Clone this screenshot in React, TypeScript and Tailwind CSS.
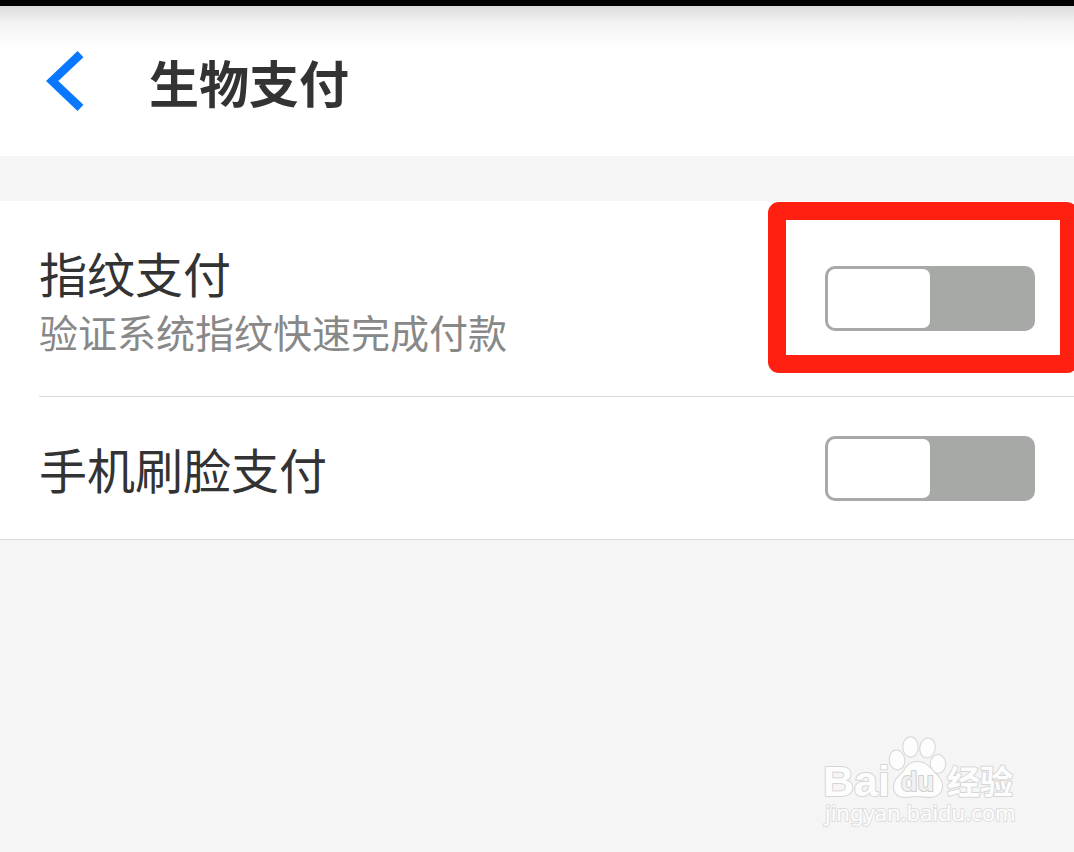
import { useState } from "react";

function Switch({ id, highlighted = false }: { id: string; highlighted?: boolean }) {
  const [on, setOn] = useState(false);
  return (
    <div className="relative h-[65px] w-[210px] shrink-0">
      <input
        id={id}
        type="checkbox"
        role="switch"
        checked={on}
        onChange={() => setOn(!on)}
        className="flex h-full w-full cursor-pointer appearance-none rounded-[10px] bg-[#a7a9a7] p-[3px] before:block before:h-full before:w-[102px] before:rounded-[7px] before:bg-white checked:justify-end checked:bg-[#0a7aff]"
      />
      {highlighted && (
        <div className="pointer-events-none absolute -top-16 -right-[43px] -bottom-[42px] -left-[57px] rounded-[11px] border-[18px] border-[#ff2012]" />
      )}
    </div>
  );
}

function Watermark() {
  return (
    <svg
      viewBox="0 0 220 115"
      className="pointer-events-none absolute right-11 bottom-3 h-[115px] w-[220px]"
      fill="#fdfdfd"
      stroke="#d6d6d6"
      strokeWidth="2"
      strokeLinejoin="round"
      paintOrder="stroke"
    >
      <text x="13" y="71" fontSize="43" fontWeight="700" fontFamily="'Liberation Sans', sans-serif">
        Bai
      </text>
      <ellipse cx="87" cy="35" rx="7.2" ry="9.5" transform="rotate(-8 87 35)" />
      <ellipse cx="100.5" cy="22" rx="7.2" ry="9.8" />
      <ellipse cx="117.5" cy="23" rx="7.2" ry="9.5" transform="rotate(10 117.5 23)" />
      <ellipse cx="128" cy="39" rx="7.2" ry="9" />
      <path d="M107 37c-7 0-10 4-13 9-4 5-10 8-10 16 0 6 4 10 11 10 5 0 7-1 12-1s8 1 13 1c7 0 12-4 12-11 0-8-6-11-10-16-4-4-7-8-15-8Z" />
      <text x="91" y="66" fontSize="27" fontWeight="700" fill="#f1f1f1" stroke="#cfcfcf" fontFamily="'Liberation Sans', sans-serif">
        du
      </text>
      <text x="137" y="69" fontSize="33" fontWeight="700" fontFamily="'Noto Sans CJK SC', sans-serif">
        经验
      </text>
      <text x="15" y="96" fontSize="22" fontFamily="'Noto Sans', sans-serif" stroke="#dddddd">
        jingyan.baidu.com
      </text>
    </svg>
  );
}

export default function App() {
  return (
    <div className="relative flex min-h-screen flex-col overflow-hidden bg-[#f5f5f5] font-['Noto_Sans_CJK_SC',sans-serif] text-[#333333]">
      <div className="h-1.5 bg-black" />
      <header className="flex h-[150px] items-center bg-linear-to-b from-[#dcdcdc] via-[#f4f4f4] via-12% to-white to-28% pl-[45px]">
        <button type="button" aria-label="返回" className="mr-16 cursor-pointer">
          <svg viewBox="0 0 40 60" className="h-[60px] w-10" fill="none" stroke="#0778ff" strokeWidth="8.5">
            <path d="M35.500 3.200 7.200 30l28.300 26.800" />
          </svg>
        </button>
        <h1 className="text-[50px] leading-[60px] font-bold">生物支付</h1>
      </header>
      <main className="mt-[45px] border-b border-[#d9d9d9] bg-white pl-[39px]">
        <div className="flex h-[196px] items-center justify-between border-b border-[#d9d9d9] pr-[39px]">
          <label htmlFor="fingerprint" className="flex flex-col">
            <span className="text-[48px] leading-[64px]">指纹支付</span>
            <span className="text-[39px] leading-[54px] text-[#888888]">验证系统指纹快速完成付款</span>
          </label>
          <Switch id="fingerprint" highlighted />
        </div>
        <div className="flex h-[142px] items-center justify-between pr-[39px]">
          <label htmlFor="face" className="text-[48px] leading-[64px]">
            手机刷脸支付
          </label>
          <Switch id="face" />
        </div>
      </main>
      <Watermark />
    </div>
  );
}
